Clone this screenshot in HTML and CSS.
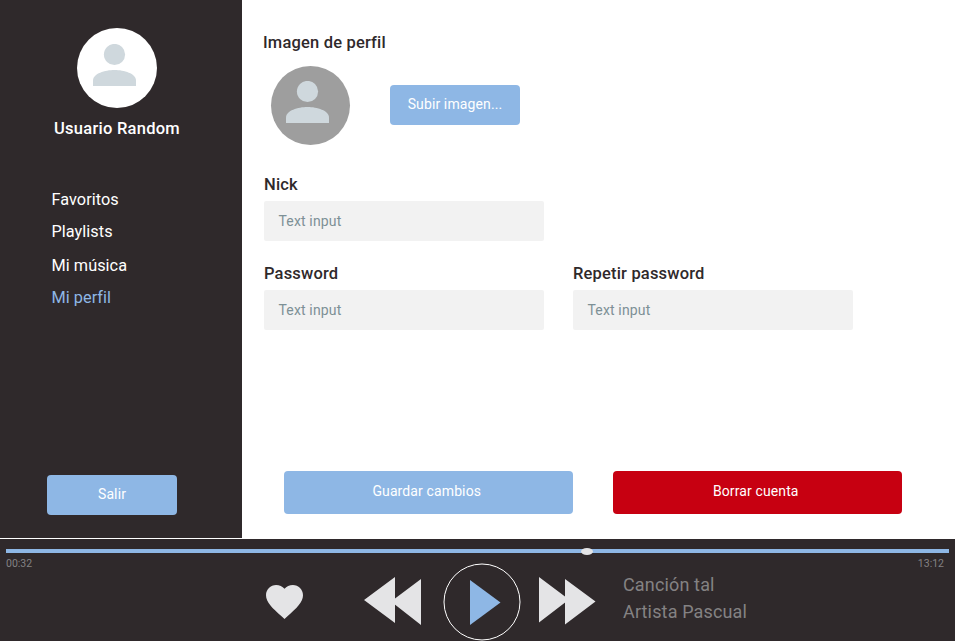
FILE: index.html
```html
<!DOCTYPE html>
<html lang="es">
<head>
<meta charset="utf-8">
<title>Mi perfil</title>
<link rel="stylesheet" href="styles.css">
</head>
<body>
<div class="app">
  <aside class="sidebar">
    <div class="avatar avatar-light">
      <svg class="person" viewBox="0 0 43 42"><circle cx="21.5" cy="10.5" r="10.6"/><path d="M0 42V36.500C0 29.500 12 26 21.500 26S43 29.500 43 36.500V42Z"/></svg>
    </div>
    <div class="user-name">Usuario Random</div>
    <nav class="menu">
      <a class="menu-item">Favoritos</a>
      <a class="menu-item">Playlists</a>
      <a class="menu-item menu-gap">Mi música</a>
      <a class="menu-item active">Mi perfil</a>
    </nav>
    <button class="btn logout">Salir</button>
  </aside>
  <main class="content">
    <div class="label title">Imagen de perfil</div>
    <div class="upload">
      <div class="avatar avatar-gray">
        <svg class="person" viewBox="0 0 43 42"><circle cx="21.5" cy="10.5" r="10.6"/><path d="M0 42V36.500C0 29.500 12 26 21.500 26S43 29.500 43 36.500V42Z"/></svg>
      </div>
      <button class="btn">Subir imagen...</button>
    </div>
    <div class="field nick">
      <div class="label">Nick</div>
      <div class="input">Text input</div>
    </div>
    <div class="field-row">
      <div class="field">
        <div class="label">Password</div>
        <div class="input">Text input</div>
      </div>
      <div class="field">
        <div class="label">Repetir password</div>
        <div class="input">Text input</div>
      </div>
    </div>
    <div class="actions">
      <button class="btn wide">Guardar cambios</button>
      <button class="btn wide danger">Borrar cuenta</button>
    </div>
  </main>
</div>
<footer class="player">
  <div class="track"><div class="knob"></div></div>
  <div class="times"><span>00:32</span><span>13:12</span></div>
  <div class="controls">
    <svg class="heart" viewBox="0 0 20 18.350" preserveAspectRatio="none"><path d="M10 18.350l-1.450-1.320C3.400 12.360 0 9.280 0 5.500 0 2.420 2.420 0 5.500 0c1.740 0 3.410.810 4.500 2.090C11.090.810 12.760 0 14.500 0 17.580 0 20 2.420 20 5.500c0 3.780-3.400 6.860-8.550 11.540L10 18.350z"/></svg>
    <svg class="skip prev" viewBox="0 0 57 48"><path d="M0 23L31 0V46ZM27 24.500L57 2V48Z"/></svg>
    <svg class="play" viewBox="0 0 78 78"><circle cx="39" cy="39" r="38"/><path d="M27 17L57.500 39.500L27 62Z"/></svg>
    <svg class="skip next" viewBox="0 0 57 48"><path d="M0 0L30 22.500L0 45.500ZM26 2L56.500 24.500L26 47.500Z"/></svg>
    <div class="song"><div>Canción tal</div><div>Artista Pascual</div></div>
  </div>
</footer>
</body>
</html>
```

FILE: styles.css
```css
* { box-sizing: border-box; }
body { margin: 0; width: 955px; height: 641px; overflow: hidden; background: #fff; color: #2f292b; font-family: Roboto, sans-serif; display: flex; flex-direction: column; }
.app { display: flex; height: 538px; margin-bottom: 1px; }
.sidebar { width: 242px; background: #2f292b; color: #fff; padding-top: 28px; display: flex; flex-direction: column; }
.avatar { width: 80px; height: 80px; border-radius: 50%; padding: 15.5px 0 0 15.500px; flex: none; }
.avatar-light { background: #fff; margin-left: 77px; }
.avatar-gray { width: 79px; height: 79px; padding-left: 15px; background: #9e9e9e; }
.person { display: block; width: 43px; height: 42px; fill: #cfd8dd; }
.user-name { margin: 11px 0 0 54px; font-size: 16.500px; line-height: 20px; font-weight: 500; letter-spacing: .26px; }
.menu { margin: 51px 0 0 51.500px; display: flex; flex-direction: column; }
.menu-item { font-size: 16.300px; line-height: 20px; margin-bottom: 12px; letter-spacing: .04px; }
.menu-gap { margin-top: 2px; }
.active { color: #8eb7e5; }
.btn { border: 0; border-radius: 4px; width: 130px; height: 40px; padding: 0 0 2px; background: #8eb7e5; color: #fff; font: 14px Roboto, sans-serif; letter-spacing: .12px; white-space: nowrap; }
.logout { margin: auto 0 23px 47px; }
.content { flex: 1; padding: 33px 0 24px 22px; display: flex; flex-direction: column; }
.label { font-size: 16.500px; line-height: 20px; font-weight: 500; letter-spacing: .18px; white-space: nowrap; }
.title { margin-left: -1px; }
.upload { display: flex; align-items: center; gap: 40px; margin: 12.500px 0 0 7px; }
.nick { margin-top: 29.500px; }
.field { width: 280px; }
.nick .input { width: 279.500px; }
.input { margin-top: 6px; height: 40px; line-height: 40px; padding-left: 14.500px; background: #f2f2f2; border-radius: 2px; color: #7d9096; font-size: 14px; letter-spacing: .15px; }
.nick { padding-top: 1px; }
.field-row { display: flex; gap: 29px; margin-top: 23px; }
.actions { display: flex; gap: 40.500px; margin: auto 0 0 20px; }
.wide { width: 288.500px; height: 43px; padding: 0 3px 3px 0; }
.danger { background: #c70011; }
.player { height: 102px; background: #2f292b; color: #848283; padding: 10px 6px 0; }
.track { height: 4px; background: #8eb7e5; }
.knob { position: relative; left: 575px; top: -1px; width: 12px; height: 7px; border-radius: 50%; background: #e4e4e6; }
.times { display: flex; justify-content: space-between; padding: 5px 5px 0 0; font-size: 10.500px; line-height: 12px; }
.controls { display: flex; align-items: flex-start; height: 78px; margin-top: -7px; }
.controls svg { flex: none; display: block; fill: #e4e4e6; }
.heart { width: 37px; height: 34px; margin: 22px 0 0 260px; }
.skip { width: 57px; height: 48px; margin-top: 14px; }
.prev { margin-left: 61px; }
.play { width: 78px; height: 78px; margin: 0 18px 0 22px; }
.controls .play circle { fill: none; stroke: #fff; stroke-width: 1; }
.controls .play path { fill: #8eb7e5; }
.song { margin: 8px 0 0 27px; font-size: 18px; line-height: 27px; letter-spacing: .15px; white-space: nowrap; }
```
